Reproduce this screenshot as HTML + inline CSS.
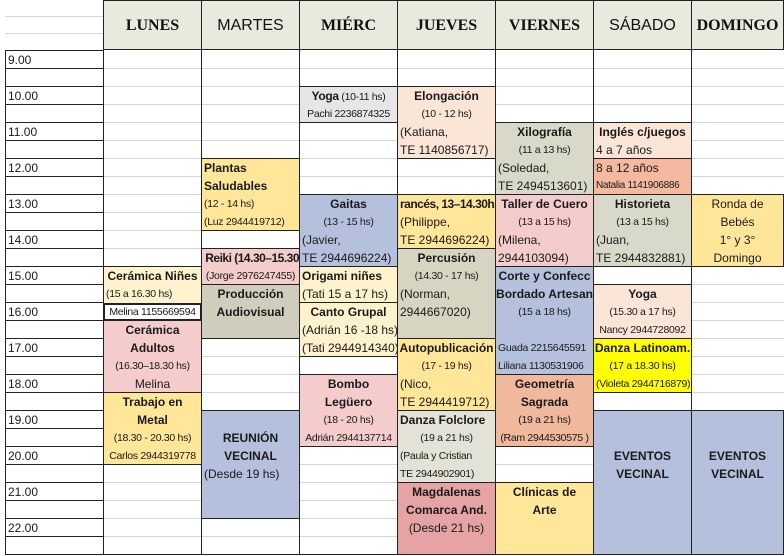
<!DOCTYPE html>
<html><head><meta charset="utf-8"><style>
body{margin:0;width:784px;height:556px;background:#fff;position:relative;overflow:hidden;font-family:"Liberation Sans",Arial,sans-serif;font-size:12px;color:#1a1a1a}
.hl{position:absolute;left:5px;width:779px;height:1px;background:#d6d6d6}
.vl{position:absolute;top:0;width:1px;height:555px;background:#222}
.hd{position:absolute;top:0;height:50px;background:#eae9de;border:1px solid #222;box-sizing:border-box;text-align:center;line-height:50px;font-family:"Liberation Serif",serif;font-size:16px;font-weight:bold;color:#111}
.t{position:absolute;left:5px;width:98px;height:18px;line-height:18px;border-top:1px solid #222;box-sizing:border-box;padding-left:3px;font-size:12px}
.b{position:absolute;border:1px solid #222;box-sizing:border-box;overflow:hidden}
.l{height:18px;line-height:18px;white-space:nowrap;overflow:hidden;text-align:center}
.L{text-align:left;padding-left:2px}
.B{font-weight:bold}
.s{font-size:10.5px;letter-spacing:-0.3px}
</style></head><body>
<div class="hl" style="top:16px"></div><div class="hl" style="top:33px"></div>
<div class="hl" style="top:68px"></div><div class="hl" style="top:86px"></div><div class="hl" style="top:104px"></div><div class="hl" style="top:122px"></div><div class="hl" style="top:140px"></div><div class="hl" style="top:158px"></div><div class="hl" style="top:176px"></div><div class="hl" style="top:194px"></div><div class="hl" style="top:212px"></div><div class="hl" style="top:230px"></div><div class="hl" style="top:248px"></div><div class="hl" style="top:266px"></div><div class="hl" style="top:284px"></div><div class="hl" style="top:302px"></div><div class="hl" style="top:320px"></div><div class="hl" style="top:338px"></div><div class="hl" style="top:356px"></div><div class="hl" style="top:374px"></div><div class="hl" style="top:392px"></div><div class="hl" style="top:410px"></div><div class="hl" style="top:428px"></div><div class="hl" style="top:446px"></div><div class="hl" style="top:464px"></div><div class="hl" style="top:482px"></div><div class="hl" style="top:500px"></div><div class="hl" style="top:518px"></div><div class="hl" style="top:536px"></div>
<div style="position:absolute;left:5px;top:554px;width:779px;height:1px;background:#222"></div>
<div class="vl" style="left:5px;top:50px;height:505px"></div>
<div class="vl" style="left:103px"></div><div class="vl" style="left:201px"></div><div class="vl" style="left:299px"></div><div class="vl" style="left:397px"></div><div class="vl" style="left:495px"></div><div class="vl" style="left:593px"></div><div class="vl" style="left:691px"></div>
<div class="hd" style="left:103px;width:99px">LUNES</div>
<div class="hd" style="left:201px;width:99px;font-family:'Liberation Sans',sans-serif;font-weight:normal">MARTES</div>
<div class="hd" style="left:299px;width:99px">MIÉRC</div>
<div class="hd" style="left:397px;width:99px">JUEVES</div>
<div class="hd" style="left:495px;width:99px">VIERNES</div>
<div class="hd" style="left:593px;width:99px;font-family:'Liberation Sans',sans-serif;font-weight:normal">SÁBADO</div>
<div class="hd" style="left:691px;width:93px">DOMINGO</div>
<div class="t" style="top:50px">9.00</div><div class="t" style="top:68px"></div>
<div class="t" style="top:86px">10.00</div><div class="t" style="top:104px"></div>
<div class="t" style="top:122px">11.00</div><div class="t" style="top:140px"></div>
<div class="t" style="top:158px">12.00</div><div class="t" style="top:176px"></div>
<div class="t" style="top:194px">13.00</div><div class="t" style="top:212px"></div>
<div class="t" style="top:230px">14.00</div><div class="t" style="top:248px"></div>
<div class="t" style="top:266px">15.00</div><div class="t" style="top:284px"></div>
<div class="t" style="top:302px">16.00</div><div class="t" style="top:320px"></div>
<div class="t" style="top:338px">17.00</div><div class="t" style="top:356px"></div>
<div class="t" style="top:374px">18.00</div><div class="t" style="top:392px"></div>
<div class="t" style="top:410px">19.00</div><div class="t" style="top:428px"></div>
<div class="t" style="top:446px">20.00</div><div class="t" style="top:464px"></div>
<div class="t" style="top:482px">21.00</div><div class="t" style="top:500px"></div>
<div class="t" style="top:518px">22.00</div><div class="t" style="top:536px"></div>

<div class="b" style="left:103px;top:266px;width:99px;height:55px;background:#fff2cc">
<div class="l B">Cerámica Niñes</div><div class="l L s">(15 a 16.30 hs)</div>
<div class="l s" style="background:#fff;border:2px solid #222;box-sizing:border-box;line-height:14px;margin:0 -1px">Melina 1155669594</div></div>
<div class="b" style="left:103px;top:320px;width:99px;height:73px;background:#f4cccc">
<div class="l B">Cerámica</div><div class="l B">Adultos</div><div class="l s">(16.30–18.30 hs)</div><div class="l">Melina</div></div>
<div class="b" style="left:103px;top:392px;width:99px;height:73px;background:#ffe699">
<div class="l B">Trabajo en</div><div class="l B">Metal</div><div class="l s">(18.30 - 20.30 hs)</div><div class="l s">Carlos 2944319778</div></div>

<div class="b" style="left:201px;top:158px;width:99px;height:73px;background:#ffe699">
<div class="l L B">Plantas</div><div class="l L B">Saludables</div><div class="l L s">(12 - 14 hs)</div><div class="l L s">(Luz 2944419712)</div></div>
<div class="b" style="left:201px;top:248px;width:99px;height:37px;background:#f4cccc">
<div class="l B" style="text-align:right;letter-spacing:-0.5px">Reiki (14.30–15.30</div><div class="l s">(Jorge 2976247455)</div></div>
<div class="b" style="left:201px;top:284px;width:99px;height:55px;background:#cfcebc">
<div class="l B">Producción</div><div class="l B">Audiovisual</div></div>
<div class="b" style="left:201px;top:410px;width:99px;height:109px;background:#b4c0dc">
<div class="l"></div><div class="l B">REUNIÓN</div><div class="l B">VECINAL</div><div class="l L">(Desde 19 hs)</div></div>

<div class="b" style="left:299px;top:86px;width:99px;height:37px;background:#e7e6e6">
<div class="l s"><b style="font-size:12px">Yoga</b> (10-11 hs)</div><div class="l s">Pachi 2236874325</div></div>
<div class="b" style="left:299px;top:194px;width:99px;height:73px;background:#b4c0dc">
<div class="l B">Gaitas</div><div class="l s">(13 - 15 hs)</div><div class="l L">(Javier,</div><div class="l L">TE 2944696224)</div></div>
<div class="b" style="left:299px;top:266px;width:99px;height:37px;background:#fff2cc">
<div class="l L B">Origami niñes</div><div class="l L">(Tati 15 a 17 hs)</div></div>
<div class="b" style="left:299px;top:302px;width:99px;height:55px;background:#fff2cc">
<div class="l B">Canto Grupal</div><div class="l L">(Adrián 16 -18 hs)</div><div class="l L">(Tati 2944914340)</div></div>
<div class="b" style="left:299px;top:374px;width:99px;height:73px;background:#f4cccc">
<div class="l B">Bombo</div><div class="l B">Legüero</div><div class="l s">(18 - 20 hs)</div><div class="l s">Adrián 2944137714</div></div>

<div class="b" style="left:397px;top:86px;width:99px;height:73px;background:#fbe5d6">
<div class="l B">Elongación</div><div class="l s">(10 - 12 hs)</div><div class="l L">(Katiana,</div><div class="l L">TE 1140856717)</div></div>
<div class="b" style="left:397px;top:194px;width:99px;height:55px;background:#ffe699">
<div class="l L B" style="letter-spacing:-0.5px">rancés, 13–14.30h</div><div class="l L">(Philippe,</div><div class="l L">TE 2944696224)</div></div>
<div class="b" style="left:397px;top:248px;width:99px;height:91px;background:#d6d5c2">
<div class="l B">Percusión</div><div class="l s">(14.30 - 17 hs)</div><div class="l L">(Norman,</div><div class="l L">2944667020)</div></div>
<div class="b" style="left:397px;top:338px;width:99px;height:73px;background:#ffe699">
<div class="l B">Autopublicación</div><div class="l s">(17 - 19 hs)</div><div class="l L">(Nico,</div><div class="l L">TE 2944419712)</div></div>
<div class="b" style="left:397px;top:410px;width:99px;height:73px;background:#e3e2d6">
<div class="l L B">Danza Folclore</div><div class="l s">(19 a 21 hs)</div><div class="l L s">(Paula y Cristian</div><div class="l L s">TE 2944902901)</div></div>
<div class="b" style="left:397px;top:482px;width:99px;height:73px;background:#e6a3a3">
<div class="l B">Magdalenas</div><div class="l B">Comarca And.</div><div class="l">(Desde 21 hs)</div></div>

<div class="b" style="left:495px;top:122px;width:99px;height:73px;background:#d9d9c9">
<div class="l B">Xilografía</div><div class="l s">(11 a 13 hs)</div><div class="l L">(Soledad,</div><div class="l L">TE 2494513601)</div></div>
<div class="b" style="left:495px;top:194px;width:99px;height:73px;background:#f4cccc">
<div class="l B">Taller de Cuero</div><div class="l s">(13 a 15 hs)</div><div class="l L">(Milena,</div><div class="l L">2944103094)</div></div>
<div class="b" style="left:495px;top:266px;width:99px;height:109px;background:#b4c0dc">
<div class="l B">Corte y Confecc</div><div class="l B">Bordado Artesan</div><div class="l s">(15 a 18 hs)</div><div class="l"></div><div class="l L s">Guada 2215645591</div><div class="l L s">Liliana 1130531906</div></div>
<div class="b" style="left:495px;top:374px;width:99px;height:73px;background:#f0b89c">
<div class="l B">Geometría</div><div class="l B">Sagrada</div><div class="l s">(19 a 21 hs)</div><div class="l s">(Ram 2944530575 )</div></div>
<div class="b" style="left:495px;top:482px;width:99px;height:73px;background:#ffe699">
<div class="l B">Clínicas de</div><div class="l B">Arte</div></div>

<div class="b" style="left:593px;top:122px;width:99px;height:37px;background:#fbe5d6">
<div class="l B">Inglés c/juegos</div><div class="l L">4 a 7 años</div></div>
<div class="b" style="left:593px;top:158px;width:99px;height:37px;background:#f4b99e">
<div class="l L">8 a 12 años</div><div class="l L s" style="font-size:10px">Natalia 1141906886</div></div>
<div class="b" style="left:593px;top:194px;width:99px;height:73px;background:#d9d9c9">
<div class="l B">Historieta</div><div class="l s">(13 a 15 hs)</div><div class="l L">(Juan,</div><div class="l L">TE 2944832881)</div></div>
<div class="b" style="left:593px;top:284px;width:99px;height:55px;background:#fbe5d6">
<div class="l B">Yoga</div><div class="l s">(15.30 a 17 hs)</div><div class="l s">Nancy 2944728092</div></div>
<div class="b" style="left:593px;top:338px;width:99px;height:55px;background:#ffff00">
<div class="l B">Danza Latinoam.</div><div class="l s">(17 a 18.30 hs)</div><div class="l L s">(Violeta 2944716879)</div></div>
<div class="b" style="left:593px;top:410px;width:99px;height:145px;background:#b4c0dc">
<div class="l"></div><div class="l"></div><div class="l B">EVENTOS</div><div class="l B">VECINAL</div></div>

<div class="b" style="left:691px;top:194px;width:93px;height:73px;background:#ffe699">
<div class="l">Ronda de</div><div class="l">Bebés</div><div class="l">1° y 3°</div><div class="l">Domingo</div></div>
<div class="b" style="left:691px;top:410px;width:93px;height:145px;background:#b4c0dc">
<div class="l"></div><div class="l"></div><div class="l B">EVENTOS</div><div class="l B">VECINAL</div></div>
</body></html>
